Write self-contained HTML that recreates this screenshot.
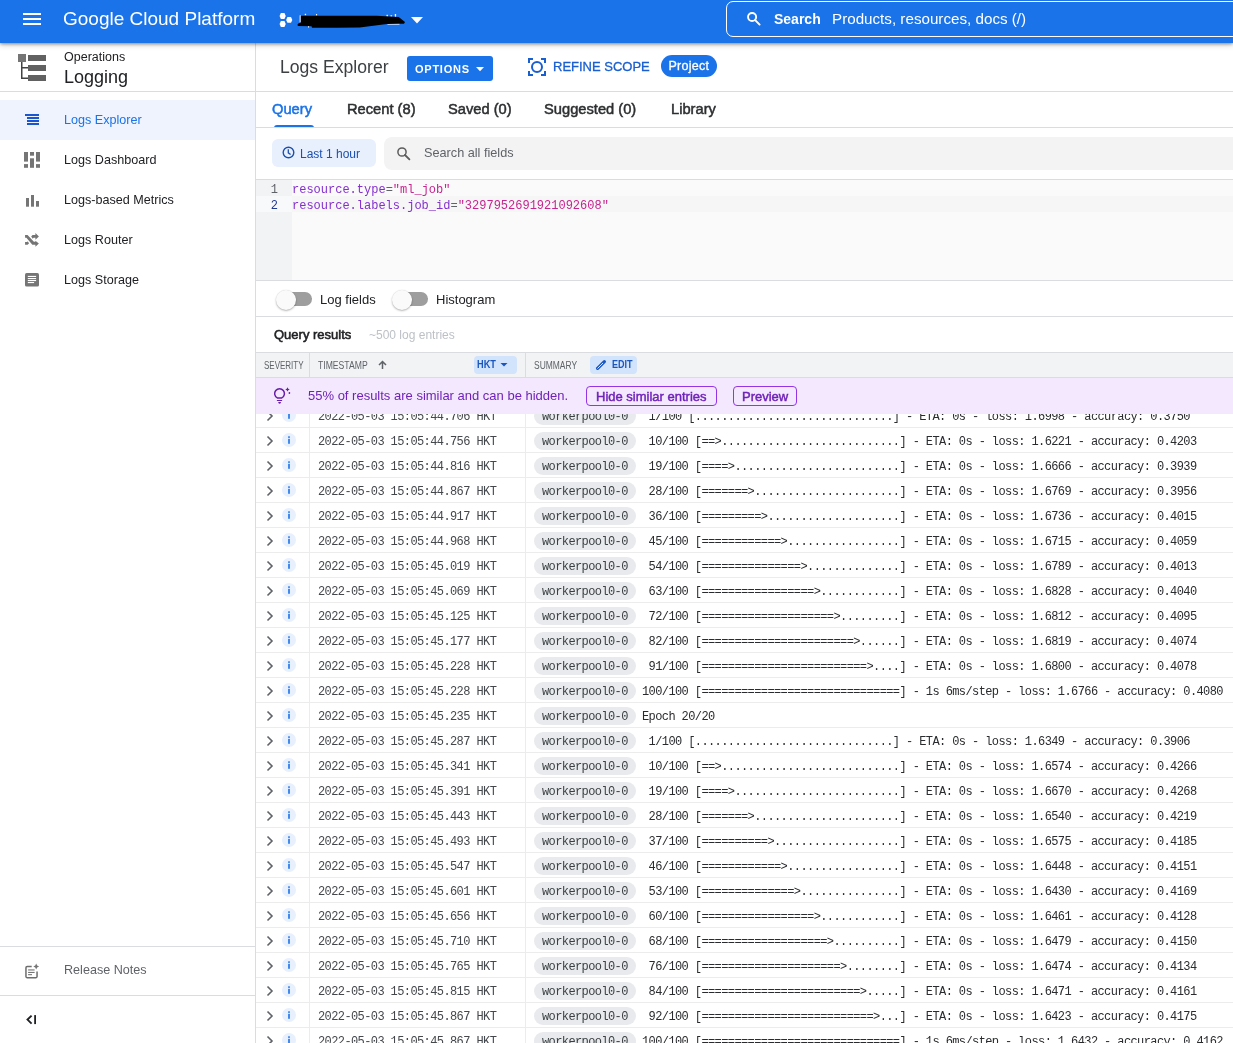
<!DOCTYPE html>
<html><head><meta charset="utf-8">
<style>
*{box-sizing:border-box}
html,body{margin:0;padding:0}
#top,#side,#main{will-change:transform}
body{width:1233px;height:1043px;overflow:hidden;position:relative;background:#fff;font-family:"Liberation Sans",sans-serif;color:#202124}
.a{position:absolute}
#top{left:0;top:0;width:1233px;height:43px;background:#1a73e8;z-index:10;box-shadow:0 1px 3px rgba(0,0,0,.35),0 2px 6px rgba(0,0,0,.2)}
#side{left:0;top:43px;width:256px;height:1000px;border-right:1px solid #dadce0;background:#fff}
#main{left:256px;top:43px;width:977px;height:1000px;background:#fff;overflow:hidden}
.nav{position:absolute;left:0;width:255px;height:40px;font-size:12.6px;color:#202124}
.nav .t{position:absolute;left:64px;top:13px}
.nav svg{position:absolute;left:24px;top:12px}
.hr{position:absolute;background:#dadce0;height:1px}
.tab{position:absolute;top:58px;font-size:14.7px;-webkit-text-stroke:0.5px currentColor;color:#2d2f31}
.r{position:relative;height:25px;border-bottom:1px solid #ececec;white-space:pre}
.r>span{position:absolute}
.chev{left:10px;top:5px}
.inf{left:26px;top:5px}
.ts{left:62px;top:7px;font:12px/14px "Liberation Mono",monospace;letter-spacing:-0.6px;color:#44474b}
.chip{left:278px;top:4px;height:18px;padding-top:1px;width:102px;border-radius:9px;background:#e8eaed;font:12px/18px "Liberation Mono",monospace;letter-spacing:-0.6px;color:#3c4043;padding-left:8px}
.sm{left:386px;top:7px;font:12px/14px "Liberation Mono",monospace;letter-spacing:-0.6px;color:#2a2b2e}
#rows{position:absolute;left:0;top:360px;width:977px}
.colb{position:absolute;width:1px;background:#ececec}
</style></head><body>

<!-- TOP BAR -->
<div id="top" class="a">
  <svg class="a" style="left:23px;top:13px" width="18" height="12" viewBox="0 0 18 12"><rect y="0" width="18" height="2" fill="#fff"/><rect y="5" width="18" height="2" fill="#fff"/><rect y="10" width="18" height="2" fill="#fff"/></svg>
  <div class="a" style="left:63px;top:8px;font-size:19px;color:#fff;letter-spacing:0">Google Cloud Platform</div>
  <svg class="a" style="left:278px;top:12px" width="16" height="16" viewBox="0 0 16 16" fill="#fff">
    <polygon points="1.57,4 2.87,1.07 6.47,1.07 7.77,4 6.47,6.93 2.87,6.93"/>
    <polygon points="8.13,7.97 9.43,5.1 13.03,5.1 14.33,7.97 13.03,10.85 9.43,10.85"/>
    <polygon points="1.57,12.03 2.87,9.1 6.47,9.1 7.77,12.03 6.47,14.97 2.87,14.97"/>
  </svg>
  <svg class="a" style="left:296px;top:12px" width="112" height="18" viewBox="0 0 112 18">
    <rect x="3.6" y="3.3" width="1.3" height="7.3" fill="#dfe9fb"/><rect x="8.8" y="1.8" width="1.3" height="1.4" fill="#fff"/><rect x="20" y="2" width="1.1" height="1.5" fill="#fff"/><rect x="12" y="14" width="1.1" height="1.5" fill="#fff"/>
    <rect x="90.5" y="2.8" width="1.4" height="1.8" fill="#fff"/><rect x="94.5" y="3.3" width="1.6" height="1.3" fill="#fff"/><rect x="98.8" y="2" width="1.3" height="2.8" fill="#fff"/><rect x="91.5" y="10.5" width="12" height="2.2" fill="#e6eefc"/>
    <path d="M4.8 3.8L80.8 3.8 102.7 5 109 10 108 11.8 105 11.8 91 12 63.7 15.5 41.8 15.7 16 15.7 15.5 14.3 1.8 14 1.6 12.2 3 11 4.8 10.6Z" fill="#000"/>
  </svg>
  <svg class="a" style="left:411px;top:17px" width="12" height="7" viewBox="0 0 12 7"><path d="M0 0h12L6 6.5z" fill="#fff"/></svg>
  <div class="a" style="left:726px;top:1px;width:520px;height:36px;border:1px solid #fff;border-radius:7px"></div>
  <svg class="a" style="left:747px;top:12px" width="14" height="14" viewBox="0 0 14 14"><circle cx="5.1" cy="5" r="4.05" fill="none" stroke="#fff" stroke-width="1.9"/><path d="M8.2 8.1L12.6 12.6" stroke="#fff" stroke-width="1.9" stroke-linecap="round"/></svg>
  <div class="a" style="left:774px;top:11px;font-size:14px;font-weight:bold;color:#fff">Search</div>
  <div class="a" style="left:832px;top:10px;font-size:15.2px;color:#fff">Products, resources, docs (/)</div>
</div>

<!-- SIDEBAR -->
<div id="side" class="a">
  <svg class="a" style="left:18px;top:11px" width="29" height="28" viewBox="0 0 29 28">
    <rect x="0" y="0" width="8" height="8" fill="#757575"/>
    <rect x="10" y="1" width="18" height="6" fill="#616161"/>
    <rect x="10" y="11" width="18" height="6" fill="#616161"/>
    <rect x="10" y="21" width="18" height="6" fill="#616161"/>
    <rect x="3" y="8" width="1.5" height="17" fill="#424242"/>
    <rect x="3" y="13" width="7" height="1.5" fill="#424242"/>
    <rect x="3" y="23.5" width="7" height="1.5" fill="#424242"/>
  </svg>
  <div class="a" style="left:64px;top:7px;font-size:12.5px;color:#202124">Operations</div>
  <div class="a" style="left:64px;top:24px;font-size:18px;color:#202124">Logging</div>
  <div class="hr" style="left:0;top:48px;width:255px"></div>

  <div class="nav" style="top:57px;background:#eff3fd;color:#1a73e8">
    <svg width="16" height="16" viewBox="0 0 16 16"><rect x="1" y="2" width="14" height="2" fill="#1a56cf"/><rect x="3" y="5" width="12" height="2" fill="#1a56cf"/><rect x="3" y="8" width="12" height="2" fill="#1a56cf"/><rect x="3" y="11" width="12" height="2" fill="#1a56cf"/></svg>
    <span class="t">Logs Explorer</span></div>
  <div class="nav" style="top:97px">
    <svg width="16" height="16" viewBox="0 0 16 16" fill="#757575"><rect x="0" y="0" width="4" height="9.6"/><rect x="0" y="12.1" width="4" height="3.7"/><rect x="6" y="0" width="4" height="3.7"/><rect x="6" y="6.3" width="4" height="9.5"/><rect x="12" y="0" width="4" height="9.6"/><rect x="12" y="12.1" width="4" height="3.7"/></svg>
    <span class="t">Logs Dashboard</span></div>
  <div class="nav" style="top:137px">
    <svg width="16" height="16" viewBox="0 0 16 16" fill="#757575"><rect x="2" y="6" width="3" height="8.7"/><rect x="7" y="3" width="3" height="11.7"/><rect x="12" y="9" width="3" height="5.7"/></svg>
    <span class="t">Logs-based Metrics</span></div>
  <div class="nav" style="top:177px">
    <svg width="16" height="16" viewBox="0 0 16 16"><g fill="#757575"><path d="M1.07 3.08H3.56L9.9 9.8H11.4V8.74L14.87 11.42 11.4 14.68V12.77H8.35L2.4 5.67H1.07Z"/><path d="M7.2 4.42L8.5 3.08H11.4V1.1L14.9 4.42 11.4 7.7V5.77H9.6L8.74 6.63Z"/><path d="M1.07 10.08H3.18L3.56 9.3 5.1 11.23 3.56 12.77H1.07Z"/></g></svg>
    <span class="t">Logs Router</span></div>
  <div class="nav" style="top:217px">
    <svg width="16" height="16" viewBox="0 0 16 16"><rect x="1" y="1.1" width="14" height="13.5" rx="1.6" fill="#757575"/><rect x="3.8" y="3.9" width="8.3" height="1.1" fill="#fff"/><rect x="3.8" y="6" width="8.3" height="1.1" fill="#fff"/><rect x="3.8" y="8" width="8.3" height="1.1" fill="#fff"/><rect x="3.8" y="10" width="6.3" height="1.1" fill="#fff"/></svg>
    <span class="t">Logs Storage</span></div>

  <div class="hr" style="left:0;top:903px;width:255px"></div>
  <div class="nav nr" style="top:907px;color:#5f6368">
    <svg width="16" height="16" viewBox="0 0 16 16" style="top:13px"><path d="M7.7 3.55H3.2A1.25 1.25 0 0 0 1.95 4.8V13.4A1.25 1.25 0 0 0 3.2 14.65H11.8A1.25 1.25 0 0 0 13.05 13.4V8.6" stroke="#6d6d6d" stroke-width="1.5" fill="none"/><rect x="4.1" y="6.4" width="6.5" height="1.1" fill="#757575"/><rect x="4.1" y="8.9" width="6.5" height="1.1" fill="#757575"/><rect x="4.1" y="11.1" width="3.9" height="1.1" fill="#757575"/><path d="M12.2 0.6Q12.6 3.1 15.1 3.5 12.6 3.9 12.2 6.4 11.8 3.9 9.3 3.5 11.8 3.1 12.2 0.6Z" fill="#757575"/></svg>
    <span class="t">Release Notes</span></div>
  <div class="hr" style="left:0;top:952px;width:255px"></div>
  <svg class="a" style="left:25px;top:970px" width="12" height="12" viewBox="0 0 12 12"><path d="M6.6 2.6L2.5 6.6l4.1 4" stroke="#202124" stroke-width="1.9" fill="none"/><rect x="9.2" y="2.1" width="1.8" height="9" fill="#202124"/></svg>
</div>

<!-- MAIN -->
<div id="main" class="a">
  <div class="a" style="left:24px;top:14px;font-size:17.6px;color:#3c4043">Logs Explorer</div>
  <div class="a" style="left:151px;top:13px;width:86px;height:25px;background:#1a73e8;border-radius:3px"></div>
  <div class="a" style="left:159px;top:20px;font-size:11px;font-weight:bold;color:#fff;letter-spacing:0.75px">OPTIONS</div>
  <svg class="a" style="left:220px;top:24px" width="8" height="5" viewBox="0 0 8 5"><path d="M0 0h8L4 4.2z" fill="#fff"/></svg>
  <svg class="a" style="left:272px;top:15px" width="18" height="18" viewBox="0 0 18 18"><path d="M1 5V1h4M13 1h4v4M17 13v4h-4M5 17H1v-4" stroke="#1a5fd0" stroke-width="2" fill="none"/><circle cx="9" cy="9" r="5" stroke="#1a5fd0" stroke-width="2" fill="none"/></svg>
  <div class="a" style="left:297px;top:16px;font-size:13px;color:#1a5fd0;-webkit-text-stroke:0.3px currentColor">REFINE SCOPE</div>
  <div class="a" style="left:405px;top:12px;width:56px;height:22px;background:#1a73e8;border-radius:11px;color:#fff;font-size:12.5px;letter-spacing:0.25px;-webkit-text-stroke:0.3px currentColor;line-height:22px;padding-left:7.5px">Project</div>
  <div class="hr" style="left:0;top:48px;width:977px"></div>

  <div class="tab" style="left:16px;color:#1a73e8">Query</div>
  <div class="tab" style="left:91px">Recent (8)</div>
  <div class="tab" style="left:192px">Saved (0)</div>
  <div class="tab" style="left:288px">Suggested (0)</div>
  <div class="tab" style="left:415px">Library</div>
  <div class="a" style="left:18px;top:82px;width:40px;height:3px;background:#1a73e8;border-radius:3px 3px 0 0"></div>
  <div class="hr" style="left:0;top:84px;width:977px"></div>

  <div class="a" style="left:16px;top:96px;width:104px;height:28px;background:#e8f0fe;border-radius:6px"></div>
  <svg class="a" style="left:26px;top:103px" width="13" height="13" viewBox="0 0 13 13"><circle cx="6.5" cy="6.5" r="5.3" stroke="#1c4fae" stroke-width="1.4" fill="none"/><path d="M6.3 3.3v3.5l2.3 1.7" stroke="#1c4fae" stroke-width="1.3" fill="none"/></svg>
  <div class="a" style="left:44px;top:104px;font-size:12px;color:#1c4fae">Last 1 hour</div>
  <div class="a" style="left:128px;top:94px;width:900px;height:33px;background:#f3f3f3;border-radius:8px"></div>
  <svg class="a" style="left:141px;top:104px" width="14" height="14" viewBox="0 0 14 14"><circle cx="5" cy="5" r="4.1" fill="none" stroke="#5c5c5c" stroke-width="1.5"/><path d="M8 8L12.4 12.4" stroke="#5c5c5c" stroke-width="1.8" stroke-linecap="round"/></svg>
  <div class="a" style="left:168px;top:103px;font-size:12.7px;color:#5f6368">Search all fields</div>

  <!-- editor -->
  <div class="hr" style="left:0;top:136px;width:977px"></div>
  <div class="a" style="left:0;top:137px;width:977px;height:100px;background:#fafafa"></div>
  <div class="a" style="left:0;top:137px;width:36px;height:100px;background:#f1f3f4"></div>
  <div class="a" style="left:0;top:153px;width:977px;height:16px;background:#f6f6f6"></div>
  <div class="a" style="left:0;top:153px;width:36px;height:16px;background:#f8f9fa"></div>
  <div class="a" style="left:0;top:139px;width:22px;text-align:right;font:12px/16px 'Liberation Mono',monospace;color:#5f6368">1</div>
  <div class="a" style="left:0;top:155px;width:22px;text-align:right;font:12px/16px 'Liberation Mono',monospace;color:#1f3a93">2</div>
  <div class="a" style="left:36px;top:139px;font:12px/16px 'Liberation Mono',monospace;color:#8430ce;white-space:pre">resource.type<span style="color:#5f6368">=</span><span style="color:#c5258f">"ml_job"</span>
resource.labels.job_id<span style="color:#5f6368">=</span><span style="color:#c5258f">"3297952691921092608"</span></div>
  <div class="hr" style="left:0;top:237px;width:977px"></div>

  <!-- toggles -->
  <div class="a" style="left:29px;top:249px;width:27px;height:14px;border-radius:7px;background:#9e9e9e"></div>
  <div class="a" style="left:20px;top:247px;width:20px;height:20px;border-radius:10px;background:#fafafa;box-shadow:0 1px 2px rgba(0,0,0,.28),0 0 1px rgba(0,0,0,.15)"></div>
  <div class="a" style="left:64px;top:249px;font-size:13px;color:#202124">Log fields</div>
  <div class="a" style="left:145px;top:249px;width:27px;height:14px;border-radius:7px;background:#9e9e9e"></div>
  <div class="a" style="left:136px;top:247px;width:20px;height:20px;border-radius:10px;background:#fafafa;box-shadow:0 1px 2px rgba(0,0,0,.28),0 0 1px rgba(0,0,0,.15)"></div>
  <div class="a" style="left:180px;top:249px;font-size:13px;color:#202124">Histogram</div>
  <div class="hr" style="left:0;top:273px;width:977px"></div>

  <div class="a" style="left:18px;top:284px;font-size:13px;-webkit-text-stroke:0.55px currentColor;color:#202124">Query results</div>
  <div class="a" style="left:113px;top:285px;font-size:12px;color:#bdc1c6">~500 log entries</div>

  <!-- log rows -->
  <div id="rows">
<div class="r"><span class="chev"><svg width="8" height="12" viewBox="0 0 8 12"><path d="M1.5 1.5L6 6l-4.5 4.5" fill="none" stroke="#5f6368" stroke-width="1.6"/></svg></span><span class="inf"><svg width="14" height="14" viewBox="0 0 14 14"><circle cx="7" cy="7" r="7" fill="#e8f0fe"/><rect x="6.2" y="3.3" width="1.6" height="1.6" fill="#1a73e8"/><rect x="6.2" y="5.8" width="1.6" height="5" fill="#1a73e8"/></svg></span><span class="ts">2022-05-03 15:05:44.706 HKT</span><span class="chip">workerpool0-0</span><span class="sm"> 1/100 [..............................] - ETA: 0s - loss: 1.6998 - accuracy: 0.3750</span></div>
<div class="r"><span class="chev"><svg width="8" height="12" viewBox="0 0 8 12"><path d="M1.5 1.5L6 6l-4.5 4.5" fill="none" stroke="#5f6368" stroke-width="1.6"/></svg></span><span class="inf"><svg width="14" height="14" viewBox="0 0 14 14"><circle cx="7" cy="7" r="7" fill="#e8f0fe"/><rect x="6.2" y="3.3" width="1.6" height="1.6" fill="#1a73e8"/><rect x="6.2" y="5.8" width="1.6" height="5" fill="#1a73e8"/></svg></span><span class="ts">2022-05-03 15:05:44.756 HKT</span><span class="chip">workerpool0-0</span><span class="sm"> 10/100 [==&gt;...........................] - ETA: 0s - loss: 1.6221 - accuracy: 0.4203</span></div>
<div class="r"><span class="chev"><svg width="8" height="12" viewBox="0 0 8 12"><path d="M1.5 1.5L6 6l-4.5 4.5" fill="none" stroke="#5f6368" stroke-width="1.6"/></svg></span><span class="inf"><svg width="14" height="14" viewBox="0 0 14 14"><circle cx="7" cy="7" r="7" fill="#e8f0fe"/><rect x="6.2" y="3.3" width="1.6" height="1.6" fill="#1a73e8"/><rect x="6.2" y="5.8" width="1.6" height="5" fill="#1a73e8"/></svg></span><span class="ts">2022-05-03 15:05:44.816 HKT</span><span class="chip">workerpool0-0</span><span class="sm"> 19/100 [====&gt;.........................] - ETA: 0s - loss: 1.6666 - accuracy: 0.3939</span></div>
<div class="r"><span class="chev"><svg width="8" height="12" viewBox="0 0 8 12"><path d="M1.5 1.5L6 6l-4.5 4.5" fill="none" stroke="#5f6368" stroke-width="1.6"/></svg></span><span class="inf"><svg width="14" height="14" viewBox="0 0 14 14"><circle cx="7" cy="7" r="7" fill="#e8f0fe"/><rect x="6.2" y="3.3" width="1.6" height="1.6" fill="#1a73e8"/><rect x="6.2" y="5.8" width="1.6" height="5" fill="#1a73e8"/></svg></span><span class="ts">2022-05-03 15:05:44.867 HKT</span><span class="chip">workerpool0-0</span><span class="sm"> 28/100 [=======&gt;......................] - ETA: 0s - loss: 1.6769 - accuracy: 0.3956</span></div>
<div class="r"><span class="chev"><svg width="8" height="12" viewBox="0 0 8 12"><path d="M1.5 1.5L6 6l-4.5 4.5" fill="none" stroke="#5f6368" stroke-width="1.6"/></svg></span><span class="inf"><svg width="14" height="14" viewBox="0 0 14 14"><circle cx="7" cy="7" r="7" fill="#e8f0fe"/><rect x="6.2" y="3.3" width="1.6" height="1.6" fill="#1a73e8"/><rect x="6.2" y="5.8" width="1.6" height="5" fill="#1a73e8"/></svg></span><span class="ts">2022-05-03 15:05:44.917 HKT</span><span class="chip">workerpool0-0</span><span class="sm"> 36/100 [=========&gt;....................] - ETA: 0s - loss: 1.6736 - accuracy: 0.4015</span></div>
<div class="r"><span class="chev"><svg width="8" height="12" viewBox="0 0 8 12"><path d="M1.5 1.5L6 6l-4.5 4.5" fill="none" stroke="#5f6368" stroke-width="1.6"/></svg></span><span class="inf"><svg width="14" height="14" viewBox="0 0 14 14"><circle cx="7" cy="7" r="7" fill="#e8f0fe"/><rect x="6.2" y="3.3" width="1.6" height="1.6" fill="#1a73e8"/><rect x="6.2" y="5.8" width="1.6" height="5" fill="#1a73e8"/></svg></span><span class="ts">2022-05-03 15:05:44.968 HKT</span><span class="chip">workerpool0-0</span><span class="sm"> 45/100 [============&gt;.................] - ETA: 0s - loss: 1.6715 - accuracy: 0.4059</span></div>
<div class="r"><span class="chev"><svg width="8" height="12" viewBox="0 0 8 12"><path d="M1.5 1.5L6 6l-4.5 4.5" fill="none" stroke="#5f6368" stroke-width="1.6"/></svg></span><span class="inf"><svg width="14" height="14" viewBox="0 0 14 14"><circle cx="7" cy="7" r="7" fill="#e8f0fe"/><rect x="6.2" y="3.3" width="1.6" height="1.6" fill="#1a73e8"/><rect x="6.2" y="5.8" width="1.6" height="5" fill="#1a73e8"/></svg></span><span class="ts">2022-05-03 15:05:45.019 HKT</span><span class="chip">workerpool0-0</span><span class="sm"> 54/100 [===============&gt;..............] - ETA: 0s - loss: 1.6789 - accuracy: 0.4013</span></div>
<div class="r"><span class="chev"><svg width="8" height="12" viewBox="0 0 8 12"><path d="M1.5 1.5L6 6l-4.5 4.5" fill="none" stroke="#5f6368" stroke-width="1.6"/></svg></span><span class="inf"><svg width="14" height="14" viewBox="0 0 14 14"><circle cx="7" cy="7" r="7" fill="#e8f0fe"/><rect x="6.2" y="3.3" width="1.6" height="1.6" fill="#1a73e8"/><rect x="6.2" y="5.8" width="1.6" height="5" fill="#1a73e8"/></svg></span><span class="ts">2022-05-03 15:05:45.069 HKT</span><span class="chip">workerpool0-0</span><span class="sm"> 63/100 [=================&gt;............] - ETA: 0s - loss: 1.6828 - accuracy: 0.4040</span></div>
<div class="r"><span class="chev"><svg width="8" height="12" viewBox="0 0 8 12"><path d="M1.5 1.5L6 6l-4.5 4.5" fill="none" stroke="#5f6368" stroke-width="1.6"/></svg></span><span class="inf"><svg width="14" height="14" viewBox="0 0 14 14"><circle cx="7" cy="7" r="7" fill="#e8f0fe"/><rect x="6.2" y="3.3" width="1.6" height="1.6" fill="#1a73e8"/><rect x="6.2" y="5.8" width="1.6" height="5" fill="#1a73e8"/></svg></span><span class="ts">2022-05-03 15:05:45.125 HKT</span><span class="chip">workerpool0-0</span><span class="sm"> 72/100 [====================&gt;.........] - ETA: 0s - loss: 1.6812 - accuracy: 0.4095</span></div>
<div class="r"><span class="chev"><svg width="8" height="12" viewBox="0 0 8 12"><path d="M1.5 1.5L6 6l-4.5 4.5" fill="none" stroke="#5f6368" stroke-width="1.6"/></svg></span><span class="inf"><svg width="14" height="14" viewBox="0 0 14 14"><circle cx="7" cy="7" r="7" fill="#e8f0fe"/><rect x="6.2" y="3.3" width="1.6" height="1.6" fill="#1a73e8"/><rect x="6.2" y="5.8" width="1.6" height="5" fill="#1a73e8"/></svg></span><span class="ts">2022-05-03 15:05:45.177 HKT</span><span class="chip">workerpool0-0</span><span class="sm"> 82/100 [=======================&gt;......] - ETA: 0s - loss: 1.6819 - accuracy: 0.4074</span></div>
<div class="r"><span class="chev"><svg width="8" height="12" viewBox="0 0 8 12"><path d="M1.5 1.5L6 6l-4.5 4.5" fill="none" stroke="#5f6368" stroke-width="1.6"/></svg></span><span class="inf"><svg width="14" height="14" viewBox="0 0 14 14"><circle cx="7" cy="7" r="7" fill="#e8f0fe"/><rect x="6.2" y="3.3" width="1.6" height="1.6" fill="#1a73e8"/><rect x="6.2" y="5.8" width="1.6" height="5" fill="#1a73e8"/></svg></span><span class="ts">2022-05-03 15:05:45.228 HKT</span><span class="chip">workerpool0-0</span><span class="sm"> 91/100 [=========================&gt;....] - ETA: 0s - loss: 1.6800 - accuracy: 0.4078</span></div>
<div class="r"><span class="chev"><svg width="8" height="12" viewBox="0 0 8 12"><path d="M1.5 1.5L6 6l-4.5 4.5" fill="none" stroke="#5f6368" stroke-width="1.6"/></svg></span><span class="inf"><svg width="14" height="14" viewBox="0 0 14 14"><circle cx="7" cy="7" r="7" fill="#e8f0fe"/><rect x="6.2" y="3.3" width="1.6" height="1.6" fill="#1a73e8"/><rect x="6.2" y="5.8" width="1.6" height="5" fill="#1a73e8"/></svg></span><span class="ts">2022-05-03 15:05:45.228 HKT</span><span class="chip">workerpool0-0</span><span class="sm">100/100 [==============================] - 1s 6ms/step - loss: 1.6766 - accuracy: 0.4080</span></div>
<div class="r"><span class="chev"><svg width="8" height="12" viewBox="0 0 8 12"><path d="M1.5 1.5L6 6l-4.5 4.5" fill="none" stroke="#5f6368" stroke-width="1.6"/></svg></span><span class="inf"><svg width="14" height="14" viewBox="0 0 14 14"><circle cx="7" cy="7" r="7" fill="#e8f0fe"/><rect x="6.2" y="3.3" width="1.6" height="1.6" fill="#1a73e8"/><rect x="6.2" y="5.8" width="1.6" height="5" fill="#1a73e8"/></svg></span><span class="ts">2022-05-03 15:05:45.235 HKT</span><span class="chip">workerpool0-0</span><span class="sm">Epoch 20/20</span></div>
<div class="r"><span class="chev"><svg width="8" height="12" viewBox="0 0 8 12"><path d="M1.5 1.5L6 6l-4.5 4.5" fill="none" stroke="#5f6368" stroke-width="1.6"/></svg></span><span class="inf"><svg width="14" height="14" viewBox="0 0 14 14"><circle cx="7" cy="7" r="7" fill="#e8f0fe"/><rect x="6.2" y="3.3" width="1.6" height="1.6" fill="#1a73e8"/><rect x="6.2" y="5.8" width="1.6" height="5" fill="#1a73e8"/></svg></span><span class="ts">2022-05-03 15:05:45.287 HKT</span><span class="chip">workerpool0-0</span><span class="sm"> 1/100 [..............................] - ETA: 0s - loss: 1.6349 - accuracy: 0.3906</span></div>
<div class="r"><span class="chev"><svg width="8" height="12" viewBox="0 0 8 12"><path d="M1.5 1.5L6 6l-4.5 4.5" fill="none" stroke="#5f6368" stroke-width="1.6"/></svg></span><span class="inf"><svg width="14" height="14" viewBox="0 0 14 14"><circle cx="7" cy="7" r="7" fill="#e8f0fe"/><rect x="6.2" y="3.3" width="1.6" height="1.6" fill="#1a73e8"/><rect x="6.2" y="5.8" width="1.6" height="5" fill="#1a73e8"/></svg></span><span class="ts">2022-05-03 15:05:45.341 HKT</span><span class="chip">workerpool0-0</span><span class="sm"> 10/100 [==&gt;...........................] - ETA: 0s - loss: 1.6574 - accuracy: 0.4266</span></div>
<div class="r"><span class="chev"><svg width="8" height="12" viewBox="0 0 8 12"><path d="M1.5 1.5L6 6l-4.5 4.5" fill="none" stroke="#5f6368" stroke-width="1.6"/></svg></span><span class="inf"><svg width="14" height="14" viewBox="0 0 14 14"><circle cx="7" cy="7" r="7" fill="#e8f0fe"/><rect x="6.2" y="3.3" width="1.6" height="1.6" fill="#1a73e8"/><rect x="6.2" y="5.8" width="1.6" height="5" fill="#1a73e8"/></svg></span><span class="ts">2022-05-03 15:05:45.391 HKT</span><span class="chip">workerpool0-0</span><span class="sm"> 19/100 [====&gt;.........................] - ETA: 0s - loss: 1.6670 - accuracy: 0.4268</span></div>
<div class="r"><span class="chev"><svg width="8" height="12" viewBox="0 0 8 12"><path d="M1.5 1.5L6 6l-4.5 4.5" fill="none" stroke="#5f6368" stroke-width="1.6"/></svg></span><span class="inf"><svg width="14" height="14" viewBox="0 0 14 14"><circle cx="7" cy="7" r="7" fill="#e8f0fe"/><rect x="6.2" y="3.3" width="1.6" height="1.6" fill="#1a73e8"/><rect x="6.2" y="5.8" width="1.6" height="5" fill="#1a73e8"/></svg></span><span class="ts">2022-05-03 15:05:45.443 HKT</span><span class="chip">workerpool0-0</span><span class="sm"> 28/100 [=======&gt;......................] - ETA: 0s - loss: 1.6540 - accuracy: 0.4219</span></div>
<div class="r"><span class="chev"><svg width="8" height="12" viewBox="0 0 8 12"><path d="M1.5 1.5L6 6l-4.5 4.5" fill="none" stroke="#5f6368" stroke-width="1.6"/></svg></span><span class="inf"><svg width="14" height="14" viewBox="0 0 14 14"><circle cx="7" cy="7" r="7" fill="#e8f0fe"/><rect x="6.2" y="3.3" width="1.6" height="1.6" fill="#1a73e8"/><rect x="6.2" y="5.8" width="1.6" height="5" fill="#1a73e8"/></svg></span><span class="ts">2022-05-03 15:05:45.493 HKT</span><span class="chip">workerpool0-0</span><span class="sm"> 37/100 [==========&gt;...................] - ETA: 0s - loss: 1.6575 - accuracy: 0.4185</span></div>
<div class="r"><span class="chev"><svg width="8" height="12" viewBox="0 0 8 12"><path d="M1.5 1.5L6 6l-4.5 4.5" fill="none" stroke="#5f6368" stroke-width="1.6"/></svg></span><span class="inf"><svg width="14" height="14" viewBox="0 0 14 14"><circle cx="7" cy="7" r="7" fill="#e8f0fe"/><rect x="6.2" y="3.3" width="1.6" height="1.6" fill="#1a73e8"/><rect x="6.2" y="5.8" width="1.6" height="5" fill="#1a73e8"/></svg></span><span class="ts">2022-05-03 15:05:45.547 HKT</span><span class="chip">workerpool0-0</span><span class="sm"> 46/100 [============&gt;.................] - ETA: 0s - loss: 1.6448 - accuracy: 0.4151</span></div>
<div class="r"><span class="chev"><svg width="8" height="12" viewBox="0 0 8 12"><path d="M1.5 1.5L6 6l-4.5 4.5" fill="none" stroke="#5f6368" stroke-width="1.6"/></svg></span><span class="inf"><svg width="14" height="14" viewBox="0 0 14 14"><circle cx="7" cy="7" r="7" fill="#e8f0fe"/><rect x="6.2" y="3.3" width="1.6" height="1.6" fill="#1a73e8"/><rect x="6.2" y="5.8" width="1.6" height="5" fill="#1a73e8"/></svg></span><span class="ts">2022-05-03 15:05:45.601 HKT</span><span class="chip">workerpool0-0</span><span class="sm"> 53/100 [==============&gt;...............] - ETA: 0s - loss: 1.6430 - accuracy: 0.4169</span></div>
<div class="r"><span class="chev"><svg width="8" height="12" viewBox="0 0 8 12"><path d="M1.5 1.5L6 6l-4.5 4.5" fill="none" stroke="#5f6368" stroke-width="1.6"/></svg></span><span class="inf"><svg width="14" height="14" viewBox="0 0 14 14"><circle cx="7" cy="7" r="7" fill="#e8f0fe"/><rect x="6.2" y="3.3" width="1.6" height="1.6" fill="#1a73e8"/><rect x="6.2" y="5.8" width="1.6" height="5" fill="#1a73e8"/></svg></span><span class="ts">2022-05-03 15:05:45.656 HKT</span><span class="chip">workerpool0-0</span><span class="sm"> 60/100 [=================&gt;............] - ETA: 0s - loss: 1.6461 - accuracy: 0.4128</span></div>
<div class="r"><span class="chev"><svg width="8" height="12" viewBox="0 0 8 12"><path d="M1.5 1.5L6 6l-4.5 4.5" fill="none" stroke="#5f6368" stroke-width="1.6"/></svg></span><span class="inf"><svg width="14" height="14" viewBox="0 0 14 14"><circle cx="7" cy="7" r="7" fill="#e8f0fe"/><rect x="6.2" y="3.3" width="1.6" height="1.6" fill="#1a73e8"/><rect x="6.2" y="5.8" width="1.6" height="5" fill="#1a73e8"/></svg></span><span class="ts">2022-05-03 15:05:45.710 HKT</span><span class="chip">workerpool0-0</span><span class="sm"> 68/100 [===================&gt;..........] - ETA: 0s - loss: 1.6479 - accuracy: 0.4150</span></div>
<div class="r"><span class="chev"><svg width="8" height="12" viewBox="0 0 8 12"><path d="M1.5 1.5L6 6l-4.5 4.5" fill="none" stroke="#5f6368" stroke-width="1.6"/></svg></span><span class="inf"><svg width="14" height="14" viewBox="0 0 14 14"><circle cx="7" cy="7" r="7" fill="#e8f0fe"/><rect x="6.2" y="3.3" width="1.6" height="1.6" fill="#1a73e8"/><rect x="6.2" y="5.8" width="1.6" height="5" fill="#1a73e8"/></svg></span><span class="ts">2022-05-03 15:05:45.765 HKT</span><span class="chip">workerpool0-0</span><span class="sm"> 76/100 [=====================&gt;........] - ETA: 0s - loss: 1.6474 - accuracy: 0.4134</span></div>
<div class="r"><span class="chev"><svg width="8" height="12" viewBox="0 0 8 12"><path d="M1.5 1.5L6 6l-4.5 4.5" fill="none" stroke="#5f6368" stroke-width="1.6"/></svg></span><span class="inf"><svg width="14" height="14" viewBox="0 0 14 14"><circle cx="7" cy="7" r="7" fill="#e8f0fe"/><rect x="6.2" y="3.3" width="1.6" height="1.6" fill="#1a73e8"/><rect x="6.2" y="5.8" width="1.6" height="5" fill="#1a73e8"/></svg></span><span class="ts">2022-05-03 15:05:45.815 HKT</span><span class="chip">workerpool0-0</span><span class="sm"> 84/100 [========================&gt;.....] - ETA: 0s - loss: 1.6471 - accuracy: 0.4161</span></div>
<div class="r"><span class="chev"><svg width="8" height="12" viewBox="0 0 8 12"><path d="M1.5 1.5L6 6l-4.5 4.5" fill="none" stroke="#5f6368" stroke-width="1.6"/></svg></span><span class="inf"><svg width="14" height="14" viewBox="0 0 14 14"><circle cx="7" cy="7" r="7" fill="#e8f0fe"/><rect x="6.2" y="3.3" width="1.6" height="1.6" fill="#1a73e8"/><rect x="6.2" y="5.8" width="1.6" height="5" fill="#1a73e8"/></svg></span><span class="ts">2022-05-03 15:05:45.867 HKT</span><span class="chip">workerpool0-0</span><span class="sm"> 92/100 [==========================&gt;...] - ETA: 0s - loss: 1.6423 - accuracy: 0.4175</span></div>
<div class="r"><span class="chev"><svg width="8" height="12" viewBox="0 0 8 12"><path d="M1.5 1.5L6 6l-4.5 4.5" fill="none" stroke="#5f6368" stroke-width="1.6"/></svg></span><span class="inf"><svg width="14" height="14" viewBox="0 0 14 14"><circle cx="7" cy="7" r="7" fill="#e8f0fe"/><rect x="6.2" y="3.3" width="1.6" height="1.6" fill="#1a73e8"/><rect x="6.2" y="5.8" width="1.6" height="5" fill="#1a73e8"/></svg></span><span class="ts">2022-05-03 15:05:45.867 HKT</span><span class="chip">workerpool0-0</span><span class="sm">100/100 [==============================] - 1s 6ms/step - loss: 1.6432 - accuracy: 0.4162</span></div>
  </div>
  <div class="colb" style="left:53px;top:309px;height:700px"></div>
  <div class="colb" style="left:269px;top:309px;height:700px"></div>

  <!-- table header -->
  <div class="a" style="left:0;top:309px;width:977px;height:26px;background:#f1f3f4;border-top:1px solid #dadce0;border-bottom:1px solid #dadce0"></div>
  <div class="a" style="left:53px;top:310px;width:1px;height:24px;background:#dadce0"></div>
  <div class="a" style="left:269px;top:310px;width:1px;height:24px;background:#dadce0"></div>
  <div class="a" style="left:8px;top:317px;font-size:10px;color:#5f6368;transform:scaleX(0.8);transform-origin:0 0">SEVERITY</div>
  <div class="a" style="left:62px;top:317px;font-size:10px;color:#5f6368;transform:scaleX(0.863);transform-origin:0 0">TIMESTAMP</div>
  <svg class="a" style="left:122px;top:317px" width="9" height="9" viewBox="0 0 9 9"><path d="M4.5 9V1.5M1 5l3.5-3.5L8 5" stroke="#5f6368" stroke-width="1.5" fill="none"/></svg>
  <div class="a" style="left:218px;top:313px;width:43px;height:18px;background:#d2e3fc;border-radius:4px"></div>
  <div class="a" style="left:221px;top:316px;font-size:10px;font-weight:bold;color:#1a56bd;transform:scaleX(0.92);transform-origin:0 0">HKT</div>
  <svg class="a" style="left:244px;top:320px" width="8" height="4" viewBox="0 0 8 4"><path d="M0.5 0h7L4 3.5z" fill="#1a56bd"/></svg>
  <div class="a" style="left:278px;top:317px;font-size:10px;color:#5f6368;transform:scaleX(0.845);transform-origin:0 0">SUMMARY</div>
  <div class="a" style="left:334px;top:313px;width:47px;height:18px;background:#d2e3fc;border-radius:4px"></div>
  <svg class="a" style="left:339px;top:316px" width="12" height="12" viewBox="0 0 12 12"><path d="M2.6 9.4L9.4 2.6" stroke="#1a56bd" stroke-width="3.2" stroke-linecap="round"/><path d="M2.7 9.3L7.8 4.2" stroke="#d2e3fc" stroke-width="1" stroke-linecap="round"/></svg>
  <div class="a" style="left:356px;top:316px;font-size:10px;font-weight:bold;color:#1a56bd;transform:scaleX(0.9);transform-origin:0 0">EDIT</div>

  <!-- banner -->
  <div class="a" style="left:0;top:335px;width:977px;height:36px;background:#f3e8fd"></div>
  <svg class="a" style="left:18px;top:344px" width="18" height="18" viewBox="0 0 18 18"><path d="M3.3 10.9A4.85 4.85 0 1 1 7.8 10.9Z" stroke="#681da8" stroke-width="1.5" fill="none" stroke-linejoin="round"/><path d="M3.4 13.5h4.2" stroke="#681da8" stroke-width="1.2" stroke-linecap="round"/><path d="M4.2 15h2.8a1.4 1.7 0 0 1-2.8 0z" fill="#681da8"/><path d="M13.5 0.2Q13.9 2 15.7 2.4 13.9 2.8 13.5 4.6 13.1 2.8 11.3 2.4 13.1 2 13.5 0.2Z" fill="#681da8"/><ellipse cx="15.4" cy="6" rx="0.85" ry="1.1" fill="#681da8"/></svg>
  <div class="a" style="left:52px;top:345px;font-size:13px;color:#6f22b8">55% of results are similar and can be hidden.</div>
  <div class="a" style="left:330px;top:343px;width:131px;height:20px;border:1px solid #9334e6;border-radius:4px"></div>
  <div class="a" style="left:340px;top:346px;font-size:13px;-webkit-text-stroke:0.45px currentColor;color:#6f22b8">Hide similar entries</div>
  <div class="a" style="left:477px;top:343px;width:64px;height:20px;border:1px solid #9334e6;border-radius:4px"></div>
  <div class="a" style="left:486px;top:346px;font-size:13px;-webkit-text-stroke:0.45px currentColor;color:#6f22b8">Preview</div>
</div>
</body></html>
